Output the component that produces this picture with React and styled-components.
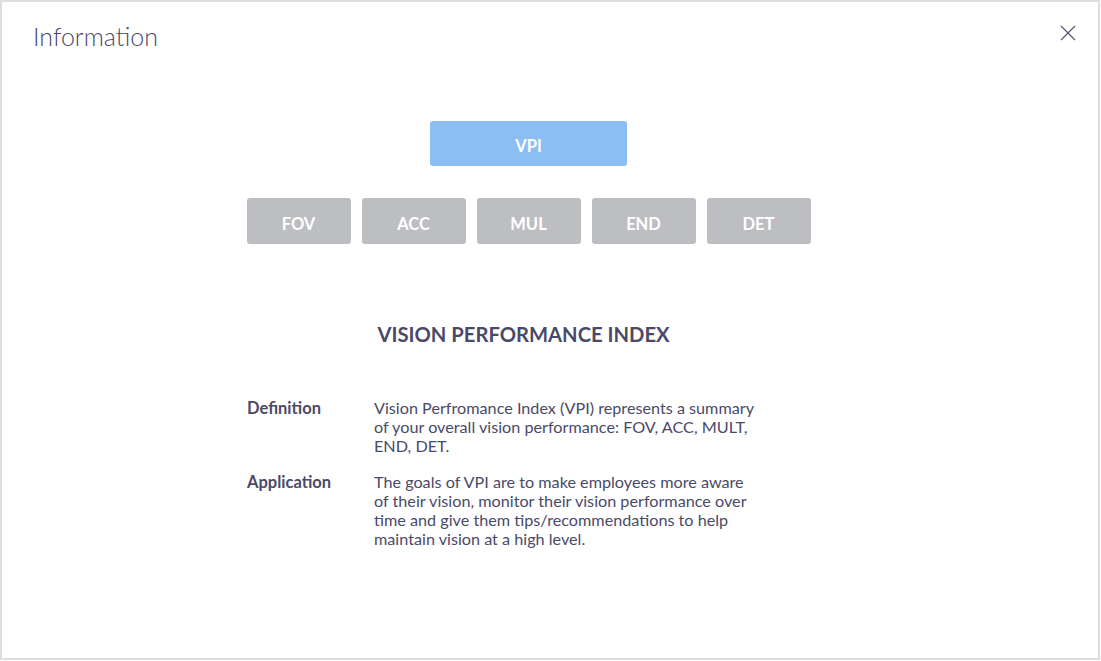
import React from "react";
import styled, { createGlobalStyle } from "styled-components";

const GlobalStyle = createGlobalStyle`
  html, body {
    margin: 0;
    padding: 0;
    background: #ffffff;
  }
  body {
    font-family: Lato, "Open Sans", sans-serif;
    color: #4a4a68;
  }
`;

const metrics = ["FOV", "ACC", "MUL", "END", "DET"];

const rows = [
  {
    label: "Definition",
    text: "Vision Perfromance Index (VPI) represents a summary of your overall vision performance: FOV, ACC, MULT, END, DET.",
  },
  {
    label: "Application",
    text: "The goals of VPI are to make employees more aware of their vision, monitor their vision performance over time and give them tips/recommendations to help maintain vision at a high level.",
  },
];

const App = () => {
  return (
    <Modal>
      <GlobalStyle />
      <Header>
        <Title>Information</Title>
        <CloseButton aria-label="Close">
          <svg width="16" height="16" viewBox="0 0 16 16">
            <path
              d="M1 1 L15 15 M15 1 L1 15"
              stroke="#5c5c74"
              strokeWidth="1.3"
              fill="none"
            />
          </svg>
        </CloseButton>
      </Header>
      <Content>
        <Tabs>
          <Tab $active $wide>VPI</Tab>
          <TabRow>
            {metrics.map((m) => (
              <Tab key={m}>{m}</Tab>
            ))}
          </TabRow>
        </Tabs>
        <Heading>VISION PERFORMANCE INDEX</Heading>
        <Details>
          {rows.map((r) => (
            <DetailRow key={r.label}>
              <Label>{r.label}</Label>
              <Text>{r.text}</Text>
            </DetailRow>
          ))}
        </Details>
      </Content>
    </Modal>
  );
};

const Modal = styled.div`
  box-sizing: border-box;
  width: 1100px;
  height: 660px;
  border: 2px solid #dedede;
  background: #fff;
`;

const Header = styled.div`
  display: flex;
  justify-content: space-between;
  align-items: flex-start;
  padding: 19px 22px 0 31px;
`;

const Title = styled.h1`
  margin: 0;
  font-size: 25px;
  font-weight: 300;
  color: #4a4a68;
  line-height: 30px;
`;

const CloseButton = styled.button`
  border: none;
  background: none;
  padding: 0;
  margin-top: 4px;
  cursor: pointer;
  display: flex;
`;

const Content = styled.div`
  width: 563px;
  margin-left: 245px;
  display: flex;
  flex-direction: column;
`;

const Tabs = styled.div`
  margin-top: 70px;
  display: flex;
  flex-direction: column;
  align-items: center;
  gap: 32px;
`;

const TabRow = styled.div`
  display: flex;
  gap: 11px;
`;

const Tab = styled.div`
  width: ${(p) => (p.$wide ? "197px" : "104px")};
  height: ${(p) => (p.$wide ? "45px" : "46px")};
  border-radius: 3px;
  background: ${(p) => (p.$active ? "#8dbef3" : "#bdbec1")};
  color: #fff;
  font-size: 16.5px;
  font-weight: 700;
  padding-top: 5px;
  box-sizing: border-box;
  display: flex;
  align-items: center;
  justify-content: center;
`;

const Heading = styled.h2`
  margin: 78px 0 0 -10px;
  text-align: center;
  font-size: 20.2px;
  font-weight: 700;
  color: #4a4a68;
  line-height: 24px;
`;

const Details = styled.div`
  margin-top: 52px;
  display: flex;
  flex-direction: column;
  gap: 17px;
`;

const DetailRow = styled.div`
  display: grid;
  grid-template-columns: 127px 384px;
`;

const Label = styled.div`
  font-size: 16.5px;
  font-weight: 700;
  line-height: 19px;
  padding-top: 1px;
  color: #4a4a68;
`;

const Text = styled.p`
  margin: 0;
  font-size: 16.2px;
  line-height: 19px;
  color: #4a4a68;
`;

export default App;
